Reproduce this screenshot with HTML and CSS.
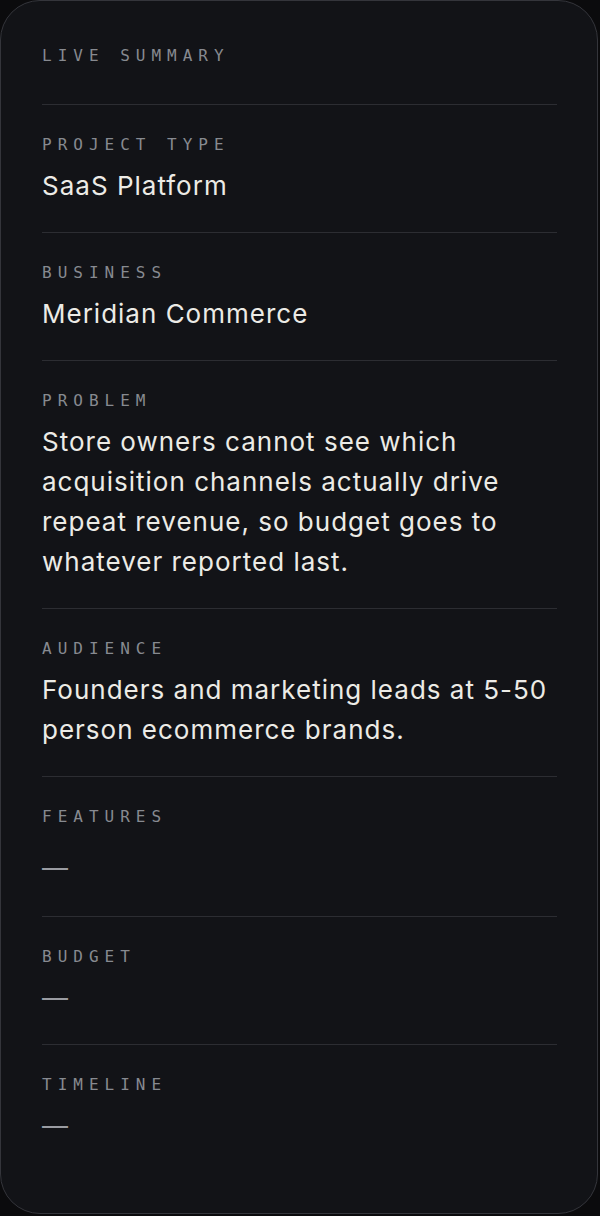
FILE: index.html
```html
<html>
    <head>
        <link rel="stylesheet" href="styles.css">
    </head>
<body>
    <div class="summary">
        <div class="summaryHead">
            <span class="label">Live Summary</span>
        </div>

        <div class="row">
            <span class="label">Project Type</span>
            <div class="value">SaaS Platform</div>
        </div>
        <div class="row">
            <span class="label">Business</span>
            <div class="value">Meridian Commerce</div>
        </div>
        <div class="row">
            <span class="label">Problem</span>
            <div class="value">Store owners cannot see which acquisition channels actually drive repeat revenue, so budget goes to whatever reported last.</div>
        </div>
        <div class="row">
            <span class="label">Audience</span>
            <div class="value">Founders and marketing leads at 5-50 person ecommerce brands.</div>
        </div>
        <div class="row">
            <span class="label">Features</span>
            <div class="value empty featureList">&mdash;</div>
        </div>
        <div class="row">
            <span class="label">Budget</span>
            <div class="value empty">&mdash;</div>
        </div>
        <div class="row last">
            <span class="label">Timeline</span>
            <div class="value empty">&mdash;</div>
        </div>
    </div>
</body>

</html>
```

FILE: styles.css
```css
* {
    box-sizing: border-box;
}
body {
    margin: 0;
    background: #0b0b0d;
    font-family: Inter, "Liberation Sans", sans-serif;
}

.summary {
    width: 598px;
    background: #121317;
    border: 1px solid #34353b;
    border-radius: 40px;
    padding: 0 40px 41px 41px;
}
.summaryHead {
    padding-top: 45px;
    padding-bottom: 38px;
    border-bottom: 1px solid #2c2d32;
}

.label {
    display: block;
    font-family: "DejaVu Sans Mono", monospace;
    font-size: 16px;
    line-height: 20px;
    letter-spacing: 6px;
    text-transform: uppercase;
    color: #878a90;
}

.row {
    padding-top: 30px;
    padding-bottom: 26px;
    border-bottom: 1px solid #2c2d32;
}
.row.last {
    border-bottom: none;
}
.value {
    margin-top: 11px;
    font-size: 26px;
    line-height: 40px;
    letter-spacing: 1px;
    color: #ecebe6;
}
.value.empty {
    letter-spacing: 0;
    color: #9a9ca2;
}
.featureList {
    padding-top: 10px;
    padding-bottom: 2px;
}
```
